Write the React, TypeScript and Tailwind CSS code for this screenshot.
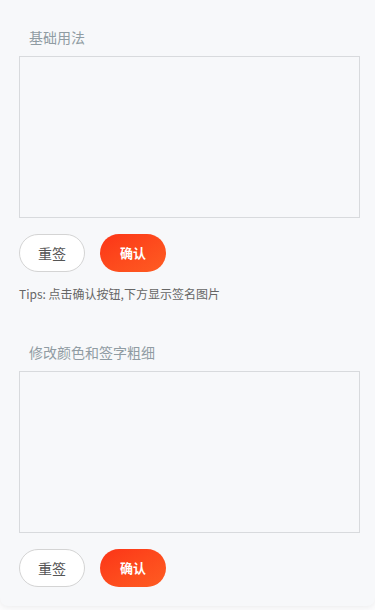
import React from 'react'

const font = { fontFamily: '"Noto Sans CJK SC", "Noto Sans", sans-serif' }

const SignBlock: React.FC<{ title: string; tips?: string }> = ({ title, tips }) => (
  <div>
    <p className="m-0 pl-[10px] text-[14px] leading-[20px] text-[#909ca3]">{title}</p>
    <div className="mt-[9px] h-[162px] border border-[#d8dadd] bg-[#f7f8fa]" />
    <div className="mt-[16px] flex gap-[15px]">
      <button className="h-[38px] w-[66px] rounded-full border border-[#d4d4d4] bg-white text-[14px] text-[#555]">
        重签
      </button>
      <button className="h-[38px] w-[66px] rounded-full bg-gradient-to-br from-[#fc3317] to-[#fe5c22] text-[13px] font-bold text-white">
        确认
      </button>
    </div>
    {tips && <p className="m-0 mt-[14px] text-[12px] leading-[16px] text-[#666]">{tips}</p>}
  </div>
)

export default function App() {
  return (
    <div className="min-h-[610px] bg-[#fcfcfd]" style={font}>
      <div className="h-[606px] rounded-b-lg bg-[#f7f8fa] pl-[19px] pr-[15px] pt-[27px] shadow-[0_1px_6px_rgba(0,0,0,0.07)]">
        <SignBlock title="基础用法" tips="Tips: 点击确认按钮,下方显示签名图片" />
        <div className="mt-[40px]">
          <SignBlock title="修改颜色和签字粗细" />
        </div>
      </div>
    </div>
  )
}
